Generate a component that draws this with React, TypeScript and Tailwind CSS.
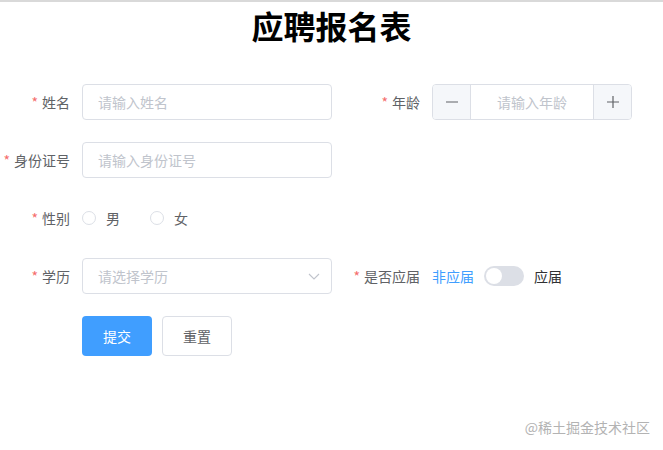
import { useState } from 'react'

const font = { fontFamily: '"Noto Sans CJK SC", "Noto Sans", sans-serif' }

function Label({ text, width = 'w-[82px]' }: { text: string; width?: string }) {
  return (
    <label className={`${width} shrink-0 pr-3 text-right text-sm leading-9 text-[#606266]`}>
      <span className="mr-1 text-[#f56c6c]">*</span>
      {text}
    </label>
  )
}

function TextInput({ placeholder }: { placeholder: string }) {
  return (
    <input
      placeholder={placeholder}
      className="h-9 w-[250px] rounded border border-[#dcdfe6] px-[15px] text-sm text-[#606266] outline-none placeholder:text-[#c0c4cc]"
    />
  )
}

export default function App() {
  const [gender, setGender] = useState('')
  const [fresh, setFresh] = useState(false)

  return (
    <div className="relative h-[450px] w-full border-t-2 border-[#d9d9d9] bg-white" style={font}>
      <h1 className="pt-[3px] text-center text-[32px] font-bold leading-[40px] text-black">应聘报名表</h1>

      <form className="mt-[39px] flex flex-col gap-[22px]" onSubmit={(e) => e.preventDefault()}>
        <div className="flex">
          <div className="flex w-[350px]">
            <Label text="姓名" />
            <TextInput placeholder="请输入姓名" />
          </div>
          <div className="flex">
            <Label text="年龄" />
            <div className="flex h-9 w-[200px] overflow-hidden rounded border border-[#dcdfe6]">
              <button type="button" className="flex w-[38px] items-center justify-center border-r border-[#dcdfe6] bg-[#f5f7fa] text-[#606266]">
                <svg width="14" height="14" viewBox="0 0 14 14"><path d="M1 7h12" stroke="currentColor" strokeWidth="1.2" /></svg>
              </button>
              <input
                placeholder="请输入年龄"
                className="w-0 flex-1 text-center text-sm text-[#606266] outline-none placeholder:text-[#c0c4cc]"
              />
              <button type="button" className="flex w-[38px] items-center justify-center border-l border-[#dcdfe6] bg-[#f5f7fa] text-[#606266]">
                <svg width="14" height="14" viewBox="0 0 14 14"><path d="M1 7h12M7 1v12" stroke="currentColor" strokeWidth="1.2" /></svg>
              </button>
            </div>
          </div>
        </div>

        <div className="flex">
          <Label text="身份证号" />
          <TextInput placeholder="请输入身份证号" />
        </div>

        <div className="flex">
          <Label text="性别" />
          <div className="flex h-9 items-center gap-[30px] text-sm text-[#606266]">
            {['男', '女'].map((g) => (
              <label key={g} className="flex cursor-pointer items-center gap-[10px]" onClick={() => setGender(g)}>
                <span className={`h-[14px] w-[14px] rounded-full border ${gender === g ? 'border-[5px] border-[#409eff]' : 'border-[#dcdfe6]'}`} />
                <span>{g}</span>
              </label>
            ))}
          </div>
        </div>

        <div className="flex">
          <div className="flex w-[350px]">
            <Label text="学历" />
            <div className="flex h-9 w-[250px] items-center justify-between rounded border border-[#dcdfe6] pl-[15px] pr-[10px] text-sm text-[#c0c4cc]">
              <span>请选择学历</span>
              <svg width="14" height="14" viewBox="0 0 14 14" fill="none">
                <path d="M2 5l5 5 5-5" stroke="#c0c4cc" strokeWidth="1.1" />
              </svg>
            </div>
          </div>
          <div className="flex">
            <Label text="是否应届" />
            <div className="flex h-9 items-center text-sm">
              <span className={`mr-[10px] ${fresh ? 'text-[#303133]' : 'text-[#409eff]'}`}>非应届</span>
              <button
                type="button"
                onClick={() => setFresh(!fresh)}
                className={`relative h-5 w-10 rounded-full ${fresh ? 'bg-[#409eff]' : 'bg-[#dcdfe6]'}`}
              >
                <span className={`absolute top-[2px] h-4 w-4 rounded-full bg-white ${fresh ? 'left-[22px]' : 'left-[2px]'}`} />
              </button>
              <span className={`ml-[10px] ${fresh ? 'text-[#409eff]' : 'text-[#303133]'}`}>应届</span>
            </div>
          </div>
        </div>

        <div className="flex gap-[10px] pl-[82px]">
          <button type="submit" className="h-10 w-[70px] rounded bg-[#409eff] text-sm text-white">提交</button>
          <button type="button" className="h-10 w-[70px] rounded border border-[#dcdfe6] bg-white text-sm text-[#606266]">重置</button>
        </div>
      </form>

      <div className="absolute bottom-[13px] right-[13px] text-sm text-[#b3b3b3]">@稀土掘金技术社区</div>
    </div>
  )
}
